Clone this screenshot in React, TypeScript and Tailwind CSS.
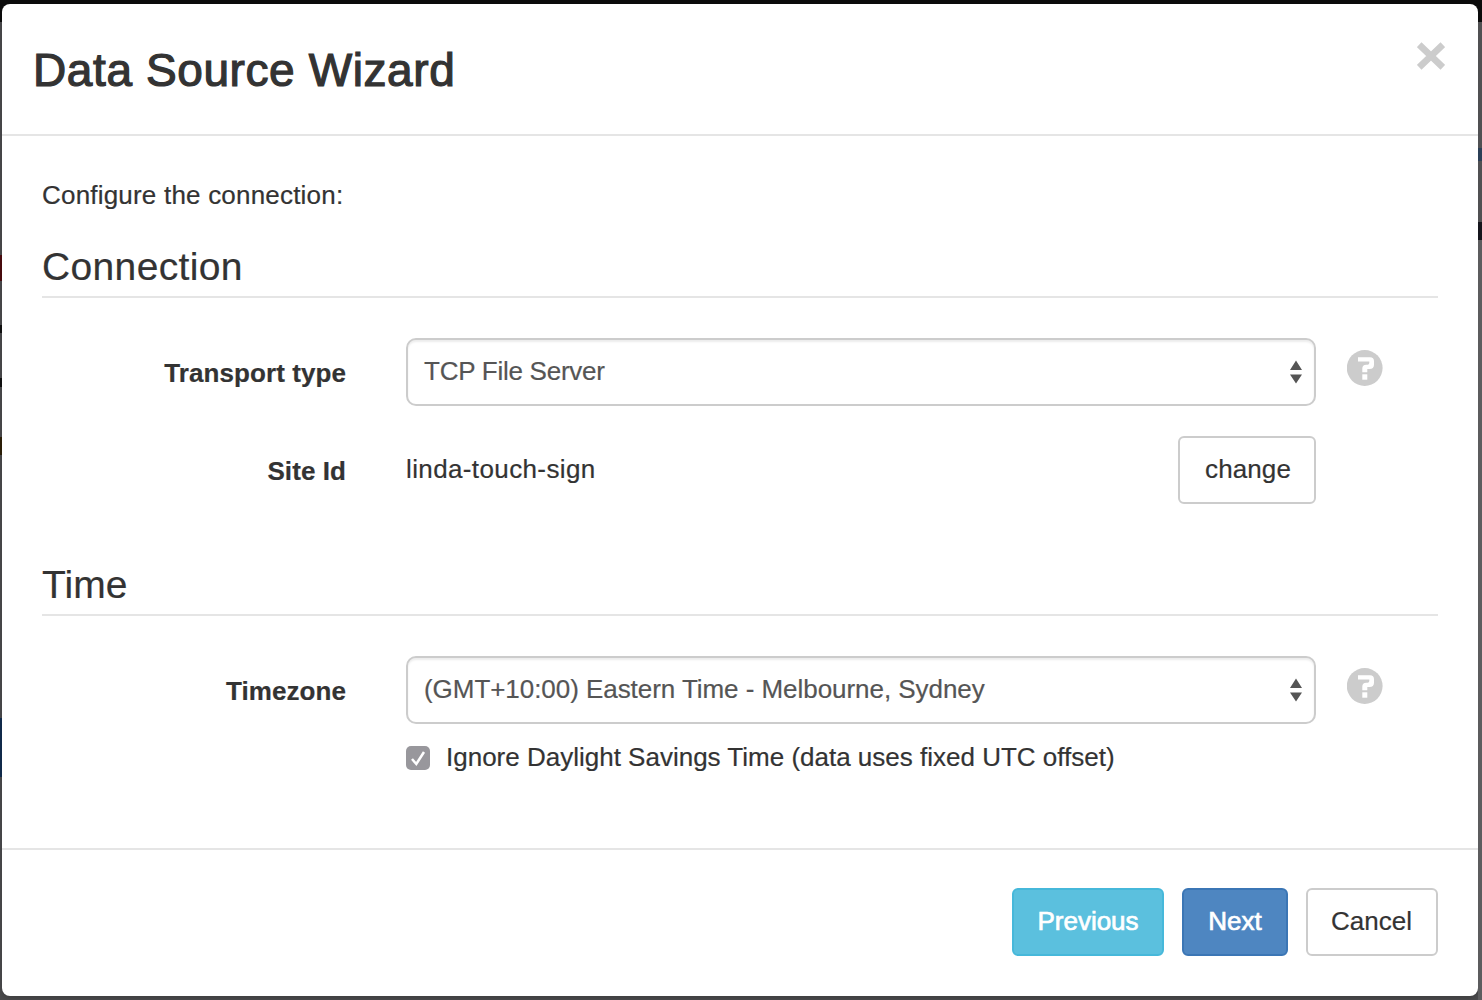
import React from "react";

function Help() {
  return (
    <svg width="36" height="36" viewBox="0 0 36 36" className="ml-[31px] mt-3 shrink-0">
      <circle cx="17.7" cy="18" r="17.9" fill="#cccccc" />
      <path d="M11 7.2H23Q27 7.2 27 11.2V14.8Q27 19 22.5 19H20.3V22.2H15.3V18.6Q15.3 14.7 19.2 14.7H20.6Q22.3 14.7 22.3 13V11.4H11Z" fill="#fff" />
      <rect x="15.3" y="24.3" width="5" height="5.4" fill="#fff" />
    </svg>
  );
}

function Select({ text, spacing }: { text: string; spacing: string }) {
  return (
    <div className="flex h-[68px] w-[910px] shrink-0 items-center justify-between rounded-[10px] border-2 border-[#cccccc] bg-white pr-3 pl-4 text-[#555555] shadow-[inset_0_2px_2px_rgba(0,0,0,0.075)]">
      <span className={`whitespace-nowrap pb-[2px] [-webkit-text-stroke:0.2px_#555555] ${spacing}`}>{text}</span>
      <svg width="12" height="24" viewBox="0 0 12 24">
        <path d="M6 0.5L12 10H0ZM0 14.5H12L6 23.5Z" fill="#555555" />
      </svg>
    </div>
  );
}

function Label({ children }: { children: React.ReactNode }) {
  return <div className="mr-[60px] w-[304px] shrink-0 pt-[17px] text-right font-bold tracking-[0.08px]">{children}</div>;
}

export default function App() {
  return (
    <div className="flex h-[1000px] w-[1482px] overflow-hidden bg-[linear-gradient(#0c0c0c_22px,#4b4b4d_22px)] font-['Liberation_Sans',Arial,sans-serif] text-[26px] leading-9 text-[#333333]">
      <div className="w-[2px] shrink-0 bg-[linear-gradient(transparent_255px,#4d0c0f_255px_281px,transparent_281px_325px,#111_325px_333px,transparent_333px_378px,#111_378px_387px,transparent_387px_437px,#2e2008_437px_455px,transparent_455px_718px,#122d50_718px_777px,transparent_777px)]" />
      <div className="mt-1 h-[992px] w-[1476px] shrink-0 rounded-[8px] bg-white shadow-[0_2px_6px_rgba(0,0,0,0.2)]">
        <header className="flex h-[132px] justify-between border-b-2 border-[#e5e5e5] pr-[33px] pl-[31px]">
          <h1 className="pt-[36px] text-[46px] leading-[60px] tracking-[0.6px] [-webkit-text-stroke:1.2px_#333333]">Data Source Wizard</h1>
          <svg width="28" height="28" viewBox="0 0 28 28" className="mt-[38px]">
            <path d="M2.2 2.7L25.8 25.3M25.8 2.7L2.2 25.3" stroke="#cccccc" strokeWidth="6.6" />
          </svg>
        </header>
        <main className="h-[712px] px-10 pt-[41px] [-webkit-text-stroke:0.2px_#333333]">
          <p className="tracking-[0.2px]">Configure the connection:</p>
          <h2 className="mt-[26px] h-[59px] border-b-2 border-[#e5e5e5] text-[39px] leading-[56px] tracking-[0.35px]">Connection</h2>
          <div className="mt-10 flex"><Label>Transport type</Label><Select text="TCP File Server" spacing="tracking-[-0.25px]" /><Help /></div>
          <div className="mt-[30px] flex h-[68px]">
            <Label>Site Id</Label>
            <span className="w-[772px] pt-[15px] tracking-[0.38px]">linda-touch-sign</span>
            <button className="h-[68px] w-[138px] rounded-[6px] border-2 border-[#cccccc] pb-[2px] pl-[2px] tracking-[0.1px]">change</button>
          </div>
          <h2 className="mt-[53px] h-[59px] border-b-2 border-[#e5e5e5] text-[39px] leading-[56px] tracking-[0.1px]">Time</h2>
          <div className="mt-10 flex"><Label>Timezone</Label><Select text="(GMT+10:00) Eastern Time - Melbourne, Sydney" spacing="tracking-[-0.05px]" /><Help /></div>
          <div className="mt-[15px] ml-[364px] flex items-center">
            <svg width="24" height="24" viewBox="0 0 24 24" className="mt-0.5">
              <rect width="24" height="24" rx="5" fill="#98979c" />
              <path d="M6 13L10.3 18L18 6" stroke="#fff" strokeWidth="2.5" fill="none" />
            </svg>
            <span className="ml-4">Ignore Daylight Savings Time (data uses fixed UTC offset)</span>
          </div>
        </main>
        <footer className="flex h-[148px] justify-end border-t-2 border-[#e5e5e5] pt-[38px] pr-10">
          <button className="h-[68px] w-[152px] rounded-[6px] border-2 border-[#46b8da] bg-[#5bc0de] pb-[2px] text-white [-webkit-text-stroke:0.7px_white]">Previous</button>
          <button className="ml-[18px] h-[68px] w-[106px] rounded-[6px] border-2 border-[#3b76b5] bg-[#4e86c1] pb-[2px] text-white [-webkit-text-stroke:0.7px_white]">Next</button>
          <button className="ml-[18px] h-[68px] w-[132px] rounded-[6px] border-2 border-[#cccccc] pr-[1px] pb-[2px] [-webkit-text-stroke:0.2px_#333333]">Cancel</button>
        </footer>
      </div>
      <div className="w-1 shrink-0 bg-[linear-gradient(transparent_22px,#505052_22px_148px,#2b3f56_148px_161px,#505052_161px_222px,#15151c_222px_240px,#5c5c5e_240px)]" />
    </div>
  );
}
